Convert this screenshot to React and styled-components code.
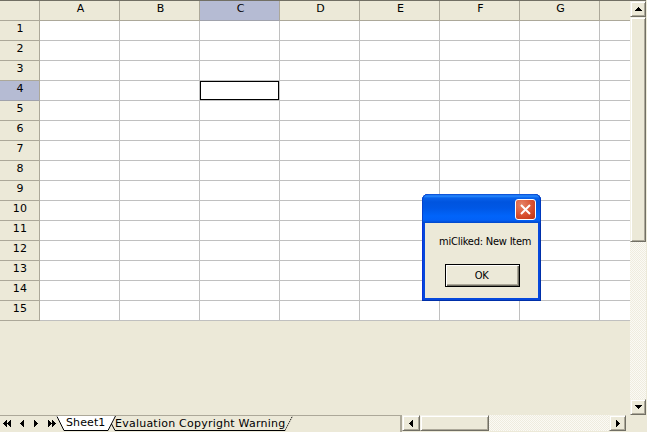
import React from "react";
import styled, { createGlobalStyle, css } from "styled-components";

const Global = createGlobalStyle`
  * { box-sizing: border-box; }
  body { margin: 0; overflow: hidden; font-family: "DejaVu Sans", Verdana, sans-serif; font-size: 11px; color: #000; }
  svg { display: block; }
`;

const Window = styled.div`
  position: relative;
  width: 648px;
  height: 432px;
  display: flex;
  flex-direction: column;
  background: #ece9d8;
  border-right: 1px solid #fff;
`;

const Upper = styled.div`
  display: flex;
  height: 415px;
  width: 646px;
  border-top: 1px solid #716f64;
`;

const Sheet = styled.div`
  width: 630px;
  height: 320px;
  overflow: hidden;
  display: grid;
  grid-template-columns: 40px repeat(8, 80px);
  grid-auto-rows: 20px;
`;

const Header = styled.div`
  background: ${(p) => (p.$selected ? "#b5bbd3" : "#ece9d8")};
  border-right: 1px solid #aca899;
  border-bottom: 1px solid ${(p) => (p.$selected ? "#a0a2ac" : "#aca899")};
  text-align: center;
  line-height: 14px;
  padding-left: ${(p) => (p.$row ? 1 : 2)}px;
  padding-top: 1px;
  letter-spacing: ${(p) => (p.$row ? 0.2 : 0)}px;
`;

const Cell = styled.div`
  background: #fff;
  border-right: 1px solid #c0c0c0;
  border-bottom: 1px solid #c0c0c0;
  box-shadow: ${(p) => (p.$selected ? "inset 0 0 0 1px #000" : "none")};
`;

const raised = css`
  background: #ece9d8;
  border: 1px solid;
  border-color: #f4f2e8 #716f64 #716f64 #f4f2e8;
  box-shadow: inset 1px 1px #fff, inset -1px -1px #aca899;
`;

const track = css`
  background: repeating-conic-gradient(#efecdf 0 25%, #fbfaf5 0 50%) 0 0 / 2px 2px;
`;

const VScroll = styled.div`
  width: 16px;
  height: 414px;
  display: flex;
  flex-direction: column;
  ${track}
`;

const HScroll = styled.div`
  width: 224px;
  height: 16px;
  display: flex;
  ${track}
`;

const ArrowButton = styled.div`
  ${raised}
  width: ${(p) => p.$w}px;
  height: 16px;
  display: flex;
  align-items: center;
  justify-content: center;
  flex: none;
`;

const Thumb = styled.div`
  ${raised}
  width: ${(p) => p.$w}px;
  height: ${(p) => p.$h}px;
  flex: none;
`;

const Spacer = styled.div`
  flex: 1;
`;

const Bottom = styled.div`
  display: flex;
  height: 17px;
`;

const TabArea = styled.div`
  width: 402px;
  display: flex;
  border-top: 1px solid #aca899;
  border-right: 2px solid #aca899;
`;

const Nav = styled.div`
  width: 56px;
  height: 16px;
`;

const Tabs = styled.div`
  position: relative;
  width: 240px;
  height: 16px;
`;

const TabShape = styled.svg`
  position: absolute;
  left: 0;
  top: 0;
`;

const TabLabel = styled.span`
  position: absolute;
  top: ${(p) => p.$top}px;
  left: ${(p) => p.$left}px;
  line-height: 14px;
  white-space: nowrap;
  letter-spacing: ${(p) => p.$spacing}px;
`;

const Dialog = styled.div`
  position: absolute;
  left: 422px;
  top: 194px;
  width: 119px;
  height: 107px;
  padding: 0 3px 3px;
  border-radius: 6px 6px 0 0;
  background: #0648dc;
  box-shadow: inset -1px -1px #002fa8, inset 1px 0 #0831d9;
`;

const TitleBar = styled.div`
  height: 29px;
  margin: 0 -3px;
  padding: 5px 5px 0 0;
  display: flex;
  justify-content: flex-end;
  border-radius: 6px 6px 0 0;
  background: linear-gradient(#0645cf 0, #278bff 2px, #0861ea 4px, #0054df 8px, #0057e5 14px, #0164fa 22px, #0261f8 26px, #0046c8 29px);
  box-shadow: inset -1px 0 #0039bc, inset 1px 0 #0642cc;
`;

const Close = styled.div`
  width: 21px;
  height: 21px;
  border: 1px solid #fff;
  border-radius: 3px;
  background: radial-gradient(circle at 30% 25%, #e58468, #d9502f 55%, #bc3011);
  display: flex;
  align-items: center;
  justify-content: center;
`;

const DialogBody = styled.div`
  height: 75px;
  background: #ece9d8;
  font-family: "DejaVu Sans Condensed", "DejaVu Sans", Tahoma, sans-serif;
  display: flex;
  flex-direction: column;
  align-items: flex-start;
`;

const Message = styled.div`
  margin: 12px 0 0 14px;
  line-height: 14px;
  white-space: nowrap;
  letter-spacing: -0.22px;
`;

const OkButton = styled.div`
  width: 75px;
  height: 23px;
  margin: 15px 0 0 20px;
  border: 1px solid #000;
  box-shadow: inset 1px 1px #fff, inset -1px -1px #716f64, inset -2px -2px #aca899;
  text-align: center;
  line-height: 21px;
  padding-right: 2px;
  letter-spacing: -0.4px;
`;

const arrows = {
  up: "M3 0h1v1h1v1h1v1h1v1H0V3h1V2h1V1h1z",
  down: "M0 0h7v1H6v1H5v1H4v1H3V3H2V2H1V1H0z",
  left: "M3 0h1v7H3V6H2V5H1V4H0V3h1V2h1V1h1z",
  right: "M0 0h1v1h1v1h1v1h1v1H3v1H2v1H1v1H0z",
};

function Arrow({ dir }) {
  const tall = dir === "left" || dir === "right";
  return (
    <svg width={tall ? 4 : 7} height={tall ? 7 : 4} shapeRendering="crispEdges">
      <path d={arrows[dir]} />
    </svg>
  );
}

const columns = ["A", "B", "C", "D", "E", "F", "G", ""];
const rows = Array.from({ length: 15 }, (_, i) => i + 1);

export default function App() {
  return (
    <Window>
      <Global />
      <Upper>
        <Sheet>
          <Header />
          {columns.map((c, i) => (
            <Header key={i} $selected={c === "C"}>{c}</Header>
          ))}
          {rows.map((r) => (
            <React.Fragment key={r}>
              <Header $row $selected={r === 4}>{r}</Header>
              {columns.map((c, i) => (
                <Cell key={i} $selected={r === 4 && c === "C"} />
              ))}
            </React.Fragment>
          ))}
        </Sheet>
        <VScroll>
          <ArrowButton $w={16}><Arrow dir="up" /></ArrowButton>
          <Thumb $w={16} $h={225} />
          <Spacer />
          <ArrowButton $w={16}><Arrow dir="down" /></ArrowButton>
        </VScroll>
      </Upper>
      <Bottom>
        <TabArea>
          <Nav>
            <svg width="56" height="16" shapeRendering="crispEdges">
              <path transform="translate(3 4)" d={arrows.left} />
              <path transform="translate(7 4)" d={arrows.left} />
              <path transform="translate(20 4)" d={arrows.left} />
              <path transform="translate(34 4)" d={arrows.right} />
              <path transform="translate(48 4)" d={arrows.right} />
              <path transform="translate(52 4)" d={arrows.right} />
            </svg>
          </Nav>
          <Tabs>
            <TabShape width="240" height="16">
              <path d="M0 0H60L53 14H8z" fill="#fff" />
              <path d="M1 0.5L8 14.5H52L59.500 0" fill="none" stroke="#000" />
              <path d="M55.500 8L59 14.500H229" fill="none" stroke="#000" />
              <path d="M229 14.500L236.500 0" fill="none" stroke="#000" strokeDasharray="1.300 1" />
            </TabShape>
            <TabLabel $left={10} $top={0} $spacing={0.1}>Sheet1</TabLabel>
            <TabLabel $left={59} $top={1} $spacing={0.23}>Evaluation Copyright Warning</TabLabel>
          </Tabs>
        </TabArea>
        <HScroll>
          <ArrowButton $w={18}><Arrow dir="left" /></ArrowButton>
          <Thumb $w={69} $h={16} />
          <Spacer />
          <ArrowButton $w={17}><Arrow dir="right" /></ArrowButton>
        </HScroll>
      </Bottom>
      <Dialog>
        <TitleBar>
          <Close>
            <svg width="11" height="11">
              <path d="M1 1L10 10M10 1L1 10" stroke="#fff" strokeWidth="2" />
            </svg>
          </Close>
        </TitleBar>
        <DialogBody>
          <Message>miCliked: New Item</Message>
          <OkButton>OK</OkButton>
        </DialogBody>
      </Dialog>
    </Window>
  );
}
